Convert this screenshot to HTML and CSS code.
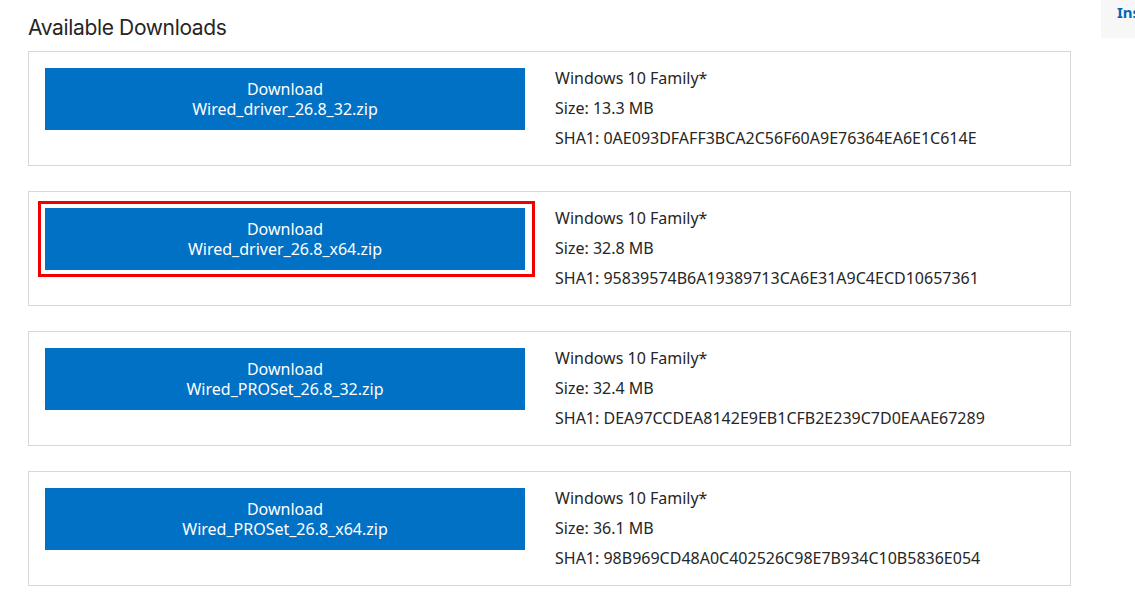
FILE: index.html
```html
<!DOCTYPE html>
<html lang="en">
<head>
<meta charset="utf-8">
<title>Available Downloads</title>
<link rel="stylesheet" href="styles.css">
</head>
<body>
<div class="page">
  <main class="downloads">
    <h2 class="title">Available Downloads</h2>
    <div class="card">
      <a class="btn" href="#">Download<br>Wired_driver_26.8_32.zip</a>
      <ul class="meta">
        <li>Windows 10 Family*</li>
        <li>Size: 13.3 MB</li>
        <li>SHA1: 0AE093DFAFF3BCA2C56F60A9E76364EA6E1C614E</li>
      </ul>
    </div>
    <div class="card">
      <div class="highlight-wrap">
        <a class="btn" href="#">Download<br>Wired_driver_26.8_x64.zip</a>
        <span class="highlight"></span>
      </div>
      <ul class="meta">
        <li>Windows 10 Family*</li>
        <li>Size: 32.8 MB</li>
        <li>SHA1: 95839574B6A19389713CA6E31A9C4ECD10657361</li>
      </ul>
    </div>
    <div class="card">
      <a class="btn" href="#">Download<br>Wired_PROSet_26.8_32.zip</a>
      <ul class="meta">
        <li>Windows 10 Family*</li>
        <li>Size: 32.4 MB</li>
        <li>SHA1: DEA97CCDEA8142E9EB1CFB2E239C7D0EAAE67289</li>
      </ul>
    </div>
    <div class="card">
      <a class="btn" href="#">Download<br>Wired_PROSet_26.8_x64.zip</a>
      <ul class="meta">
        <li>Windows 10 Family*</li>
        <li>Size: 36.1 MB</li>
        <li>SHA1: 98B969CD48A0C402526C98E7B934C10B5836E054</li>
      </ul>
    </div>
  </main>
  <aside class="side">
    <div class="side-box"><a class="side-link" href="#">Ins</a></div>
  </aside>
</div>
</body>
</html>
```
FILE: styles.css
```css
* { box-sizing: border-box; }
html, body { margin: 0; padding: 0; background: #fff; }
body {
  font-family: "Noto Sans", "Open Sans", sans-serif;
  color: #262626;
  overflow: hidden;
}
.page {
  display: flex;
  width: 1135px;
  height: 609px;
}
.downloads {
  flex: none;
  width: 1071px;
  padding-left: 28px;
  padding-top: 13px;
}
.title {
  margin: 0 0 8px 0;
  font-family: "Inter", "Noto Sans", sans-serif;
  font-weight: 400;
  font-size: 21px;
  line-height: 30px;
  letter-spacing: -0.35px;
  color: #262626;
}
.card {
  display: flex;
  align-items: flex-start;
  border: 1px solid #d7d7d7;
  padding: 16px;
  margin-bottom: 25px;
  height: 115px;
}
.highlight-wrap {
  position: relative;
  display: flex;
}
.highlight {
  position: absolute;
  left: -7px;
  top: -7px;
  width: 497px;
  height: 76px;
  border: 3px solid #f00000;
}
.btn {
  display: block;
  flex: none;
  width: 480px;
  height: 62px;
  padding-top: 11px;
  background: #0071c5;
  color: #fff;
  text-align: center;
  text-decoration: none;
  font-size: 16px;
  line-height: 20px;
}
.meta {
  list-style: none;
  margin: 0 0 0 30px;
  padding: 0;
  font-size: 16px;
  line-height: 20px;
  color: #262626;
}
.meta li + li { margin-top: 10px; }
.side {
  flex: 1;
  padding-left: 30px;
}
.side-box {
  background: #f7f7f7;
  height: 38px;
  padding: 1px 0 0 16px;
}
.side-link {
  color: #0068b5;
  font-weight: 700;
  font-size: 15px;
  line-height: 20px;
  text-decoration: none;
}
```
